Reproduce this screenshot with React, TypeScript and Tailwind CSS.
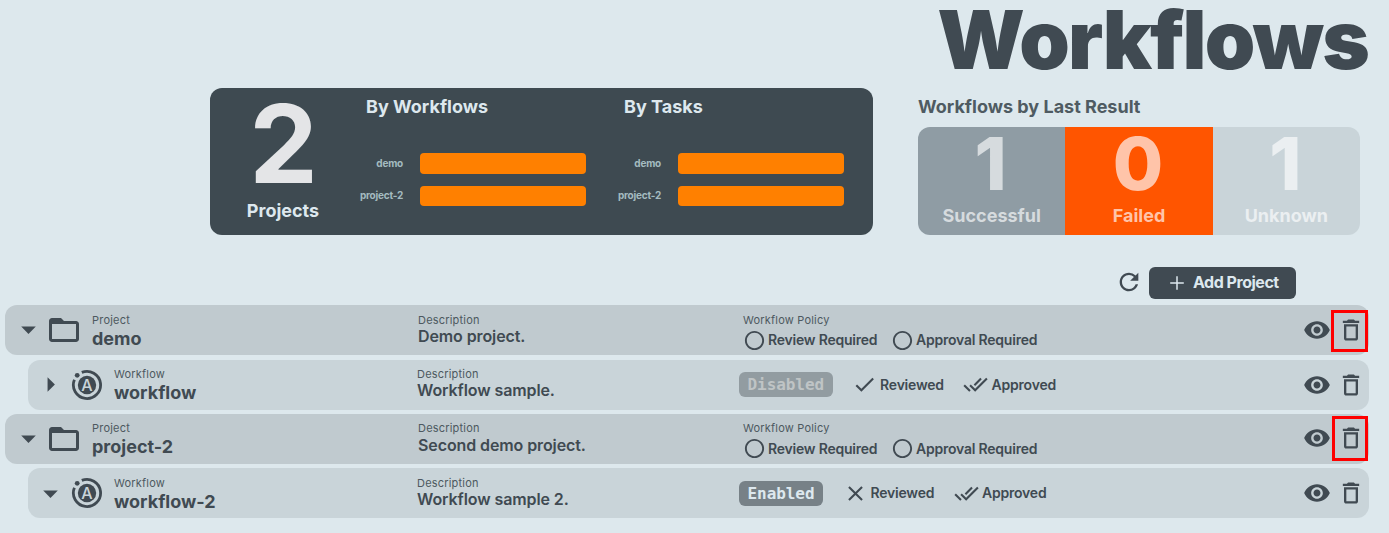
import type { ReactNode } from "react";
import {
  MdArrowDropDown,
  MdArrowRight,
  MdCheck,
  MdClose,
  MdDeleteOutline,
  MdDoneAll,
  MdFolderOpen,
  MdRadioButtonUnchecked,
  MdRefresh,
  MdVisibility,
} from "react-icons/md";

function BarChart({ title }: { title: string }) {
  return (
    <div className="w-[258px] pt-[7px]">
      <h3 className="ml-[13px] h-6 text-[18px] leading-6 font-bold text-[#dde8ee]">{title}</h3>
      <div className="mt-[34.4px] flex flex-col gap-3">
        {["demo", "project-2"].map((name) => (
          <div key={name} className="flex h-[20.5px] items-center">
            <span className="mb-[0.5px] w-[50px] text-right text-[10px] font-bold tracking-[-0.22px] whitespace-nowrap text-[#a4bbc0]">{name}</span>
            <div className="ml-[17px] h-full w-[166px] rounded bg-[#ff8000]" />
          </div>
        ))}
      </div>
    </div>
  );
}

function Result({ count, label, className }: { count: number; label: string; className: string }) {
  return (
    <div className={"flex flex-1 flex-col items-center " + className}>
      <div className="mr-[2px] h-[76px] text-[73px] leading-[73px] font-extrabold">{count}</div>
      <div className="text-[18px] leading-[26px] font-bold">{label}</div>
    </div>
  );
}

function WorkflowIcon() {
  return (
    <svg className="h-8 w-8" viewBox="0 0 32 32">
      <circle cx="16" cy="16" r="9.2" fill="#404a52" />
      <path d="M10.8 3.4A13.6 13.6 0 1 1 3.4 10.8" fill="none" stroke="#404a52" strokeWidth="2.8" />
      <circle cx="6.2" cy="6.3" r="2.4" fill="#404a52" />
      <text x="16" y="21.8" textAnchor="middle" fontSize="16" fontWeight="500" fill="#c9d4d9">A</text>
    </svg>
  );
}

function Actions({ marked }: { marked?: "first" | "second" }) {
  return (
    <div className={"relative ml-auto flex items-center gap-[6px] pr-1 " + (marked === "second" ? "pb-[1.5px]" : "")}>
      <MdVisibility size={28} />
      <MdDeleteOutline size={28} />
      {marked === "first" && (
        <div className="absolute top-[5px] right-[1px] h-[42px] w-[37px] border-[3px] border-[#fe0000]" />
      )}
      {marked === "second" && (
        <div className="absolute top-[2px] right-[1px] h-[45px] w-[36px] border-[3px] border-[#fe0000]" />
      )}
    </div>
  );
}

function Field({ label, children }: { label: string; children: ReactNode }) {
  return (
    <div className="flex flex-col whitespace-nowrap">
      <span className="text-[11px] leading-[14px] tracking-[0.2px] text-[#4d5960]">{label}</span>
      {children}
    </div>
  );
}

function Name({ children }: { children: ReactNode }) {
  return <span className="text-[18px] leading-[23px] font-bold">{children}</span>;
}

function Description({ children, lower }: { children: ReactNode; lower?: boolean }) {
  return (
    <Field label="Description">
      <span className={"text-[16px] leading-[19px] font-semibold tracking-[-0.1px] " + (lower ? "mt-px" : "")}>{children}</span>
    </Field>
  );
}

function ProjectRow({ name, description, marked }: { name: string; description: string; marked: "first" | "second" }) {
  const top = marked === "first" ? "pt-2" : "pt-[7px]";
  const label = marked === "first" ? "mb-px" : "";
  return (
    <div className="flex h-[50px] rounded-xl bg-[#c0cacf]">
      <div className="flex w-[87px] items-center pl-[5.5px]">
        <MdArrowDropDown size={35} className="mb-px" />
        <MdFolderOpen size={36} />
      </div>
      <div className={"w-[326px] " + top}>
        <Field label="Project"><Name>{name}</Name></Field>
      </div>
      <div className={"w-[325px] " + top}>
        <Description lower={marked === "second"}>{description}</Description>
      </div>
      <div className={top}>
        <Field label="Workflow Policy">
          <div className="flex h-[26px] items-center text-[14px] font-semibold tracking-[-0.22px]">
            <MdRadioButtonUnchecked size={23} />
            <span className={"ml-[2px] w-[123px] " + label}>Review Required</span>
            <MdRadioButtonUnchecked size={23} />
            <span className={"ml-[2px] " + label}>Approval Required</span>
          </div>
        </Field>
      </div>
      <Actions marked={marked} />
    </div>
  );
}

function WorkflowRow({ name, description, enabled, open }: { name: string; description: string; enabled: boolean; open: boolean }) {
  const top = open ? "pt-2" : "pt-[7px]";
  return (
    <div className={"ml-[23px] flex h-[50px] rounded-xl bg-[#c9d4d9] " + (open ? "" : "pb-px")}>
      <div className="flex w-[86px] items-center pl-[4.5px]">
        {open ? <MdArrowDropDown size={35} /> : <MdArrowRight size={35} />}
        <span className="ml-[3px]"><WorkflowIcon /></span>
      </div>
      <div className={"w-[303px] " + top}>
        <Field label="Workflow"><Name>{name}</Name></Field>
      </div>
      <div className={"w-[322px] " + top}>
        <Description>{description}</Description>
      </div>
      <div className="flex items-center text-[14px] font-semibold tracking-[-0.22px]">
        <span
          className={
            "mr-[19.5px] rounded-md px-[8.5px] font-['DejaVu_Sans_Mono',monospace] text-[16px] leading-[25px] font-bold tracking-[-0.06px] " +
            (enabled ? "bg-[#778187] text-[#dde8ee]" : "bg-[#929ca1] text-[#bfc4c5]")
          }
        >
          {enabled ? "Enabled" : "Disabled"}
        </span>
        {enabled ? <MdClose size={25} /> : <MdCheck size={25} />}
        <span className="mb-px ml-[3px] w-[83px]">Reviewed</span>
        <MdDoneAll size={25} />
        <span className="mb-px ml-[3.5px]">Approved</span>
      </div>
      <Actions />
    </div>
  );
}

export default function App() {
  return (
    <main className="h-[533px] w-[1389px] overflow-hidden bg-[#dde8ed] font-['Inter',sans-serif] text-[#404a52]">
      <h1 className="h-[88px] pr-[21px] text-right text-[81px] leading-[81px] font-black tracking-[-1.75px]">Workflows</h1>
      <div className="flex h-[147px] pl-[210px]">
        <section className="flex w-[663px] rounded-xl bg-[#3e4a51]">
          <div className="flex w-[143px] flex-col items-center pl-[3px]">
            <div className="h-[109px] pl-px text-[109px] leading-[110px] font-bold text-[#e4e5e7]">2</div>
            <div className="text-[18px] leading-[28px] font-bold text-[#dde8ee]">Projects</div>
          </div>
          <BarChart title="By Workflows" />
          <BarChart title="By Tasks" />
        </section>
        <section className="ml-[45px] w-[442px]">
          <h2 className="h-[39px] pt-[7px] text-[18px] leading-6 font-bold text-[#4f5b62]">Workflows by Last Result</h2>
          <div className="flex h-[108px] overflow-hidden rounded-xl">
            <Result count={1} label="Successful" className="bg-[#8f9ca4] text-[#d6dbde]" />
            <Result count={0} label="Failed" className="bg-[#ff5500] text-[#ffc4a9]" />
            <Result count={1} label="Unknown" className="bg-[#c9d4d9] text-[#ebeff1]" />
          </div>
        </section>
      </div>
      <div className="mt-8 flex h-8 items-center justify-end pr-[93px]">
        <MdRefresh size={28} className="mb-[2px]" />
        <button className="ml-[6.5px] flex h-8 w-[147px] items-center rounded-md bg-[#404a52] pl-[16px] text-[16px] leading-[20px] font-bold tracking-[-0.48px] text-[#dde8ee]">
          <svg width="24" height="24" viewBox="0 0 24 24" fill="none" stroke="currentColor" strokeWidth="1.5">
            <path d="M12 5.2v13.6M5.2 12h13.6" />
          </svg>
          <span className="mb-[2px] ml-1 whitespace-nowrap">Add Project</span>
        </button>
      </div>
      <div className="mt-[6px] flex w-[1369px] flex-col gap-1 pl-[5px]">
        <ProjectRow name="demo" description="Demo project." marked="first" />
        <div className="mt-px">
          <WorkflowRow name="workflow" description="Workflow sample." enabled={false} open={false} />
        </div>
        <ProjectRow name="project-2" description="Second demo project." marked="second" />
        <WorkflowRow name="workflow-2" description="Workflow sample 2." enabled open />
      </div>
    </main>
  );
}
